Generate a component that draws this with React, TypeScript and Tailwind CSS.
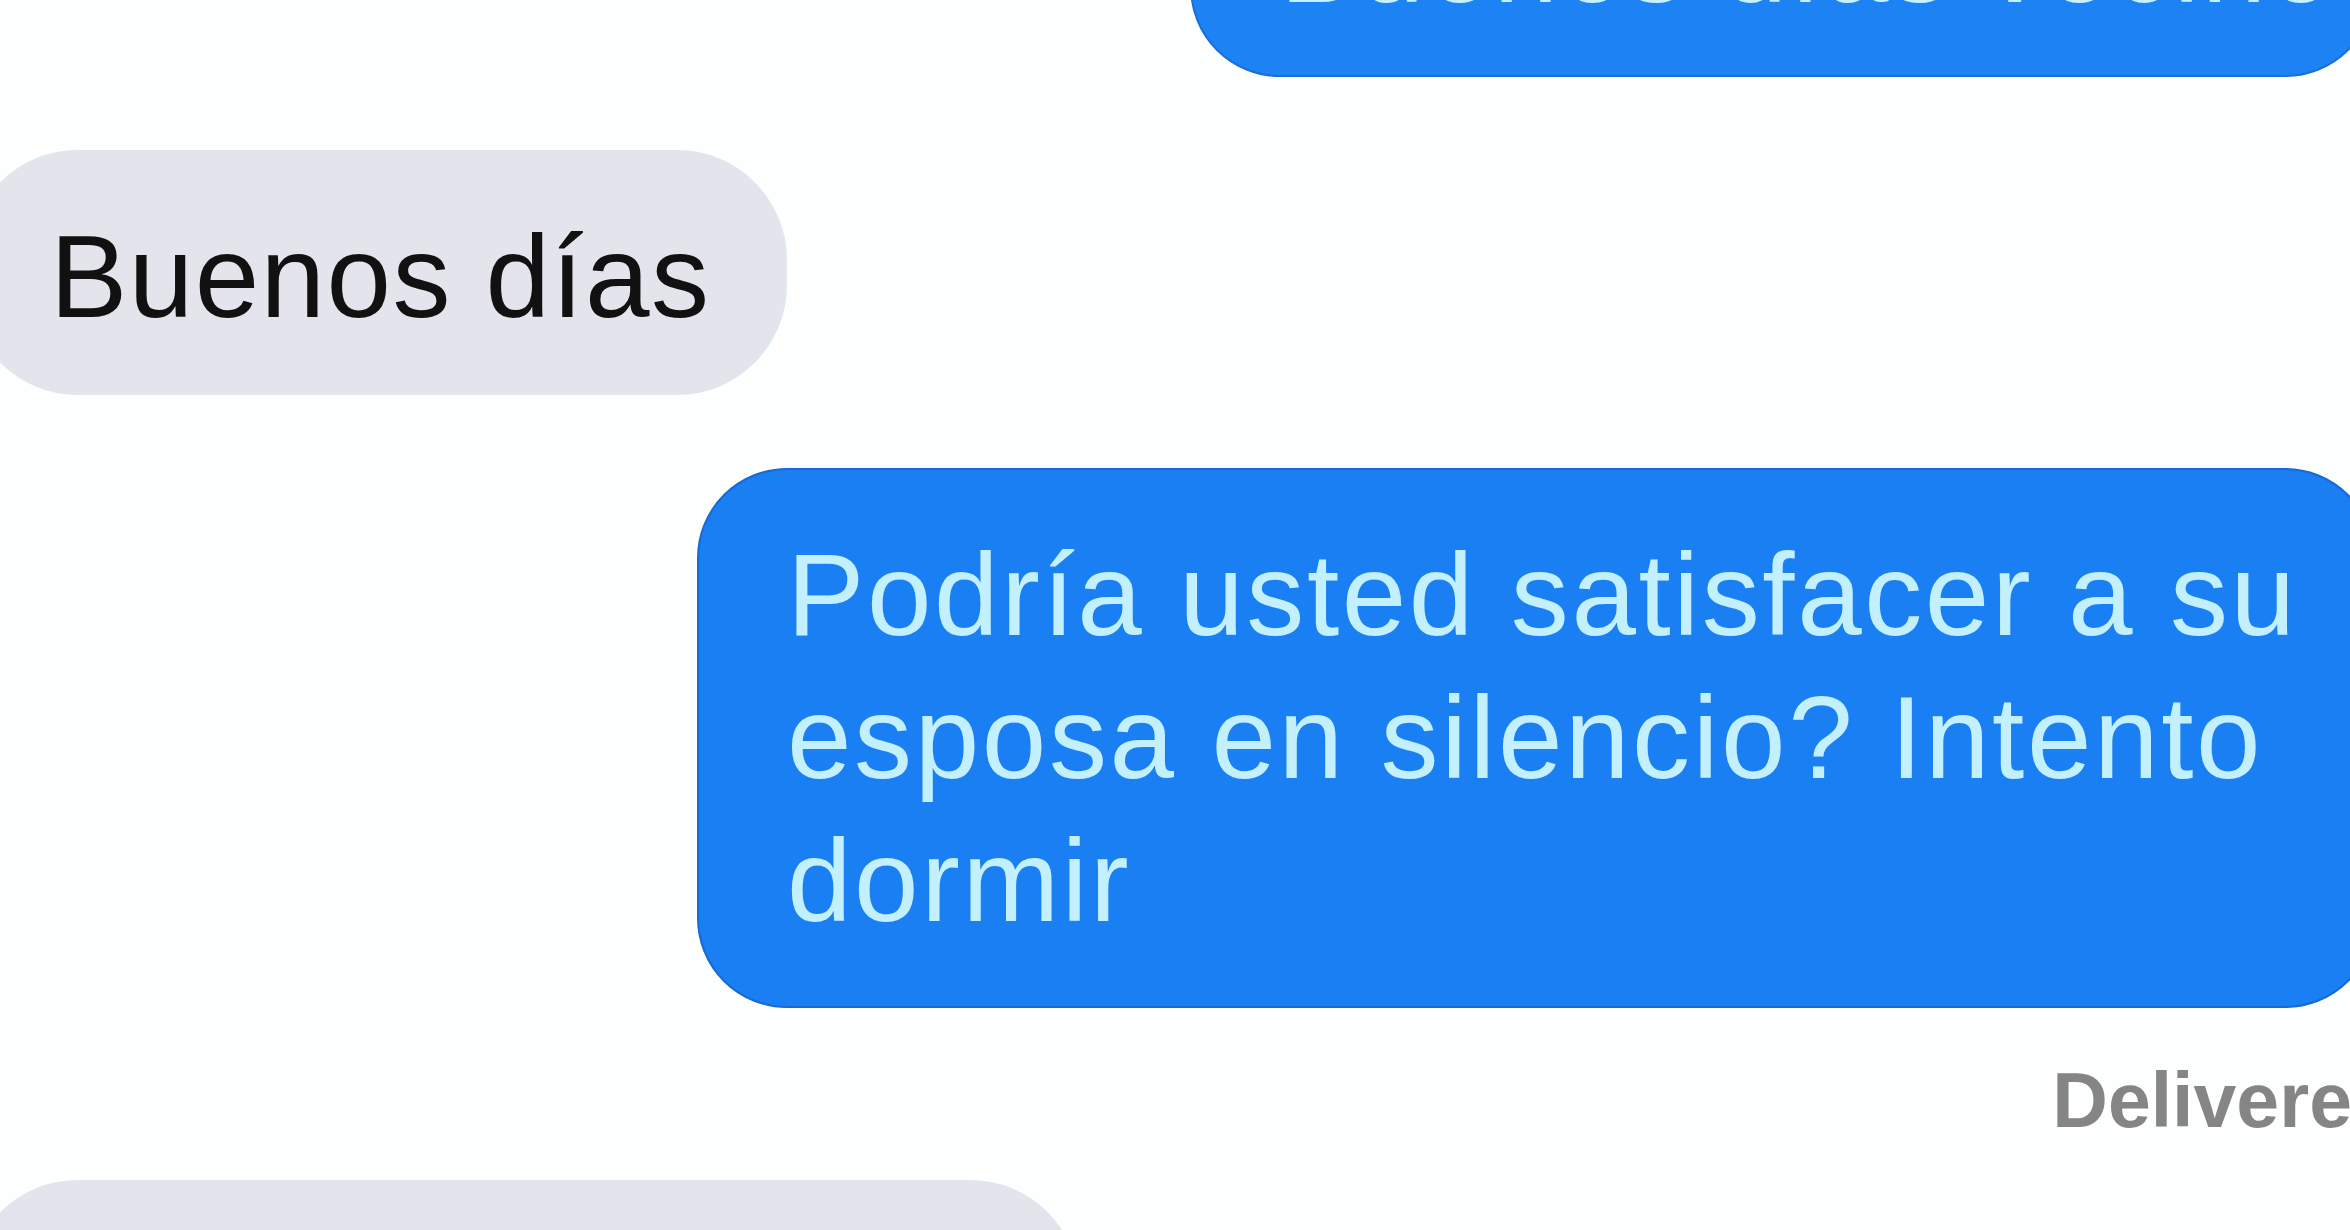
import React from 'react';

const bubbleText =
  "text-[116px] leading-[143px] whitespace-nowrap font-['Liberation_Sans',Arial,sans-serif]";

const App = () => {
  return (
    <div className="w-full h-[1230px] overflow-hidden bg-[#fdfefe] flex flex-col font-['Liberation_Sans',Arial,sans-serif]">
      {/* previous outgoing message, mostly scrolled out of view */}
      <div className={`self-end mr-[-25px] mt-[-165px] w-[1185px] rounded-[90px] bg-[#1d82f3] border-2 border-[#1a6fd6] pl-[88px] pt-[54px] pb-[41px] tracking-[2.4px] text-[#c6f2ff] ${bubbleText}`}>
        Buenos días vecino
      </div>

      {/* incoming */}
      <div className={`mt-[73px] ml-[-32px] w-[819px] rounded-[110px] bg-[#e4e4ec] pl-[82px] pt-[56px] pb-[46px] tracking-[1.4px] text-[#111111] ${bubbleText}`}>
        Buenos días
      </div>

      {/* outgoing */}
      <div className={`self-end mr-[-25px] mt-[73px] w-[1678px] rounded-[90px] bg-[#1a7ff2] border-2 border-[#1769d6] pl-[88px] pt-[54px] pb-[53px] tracking-[2.6px] text-[#c2f0ff] ${bubbleText}`}>
        Podría usted satisfacer a su
        <br />
        esposa en silencio? Intento
        <br />
        dormir
      </div>

      <div className="self-end mr-[-49px] mt-[54px] text-[77px] leading-[77px] font-bold text-[#858585] whitespace-nowrap">
        Delivered
      </div>

      {/* next incoming, cut off at the bottom */}
      <div className="mt-[41px] ml-[-32px] w-[1112px] h-[245px] shrink-0 rounded-[110px] bg-[#e4e4ec]" />
    </div>
  );
};

export default App;
